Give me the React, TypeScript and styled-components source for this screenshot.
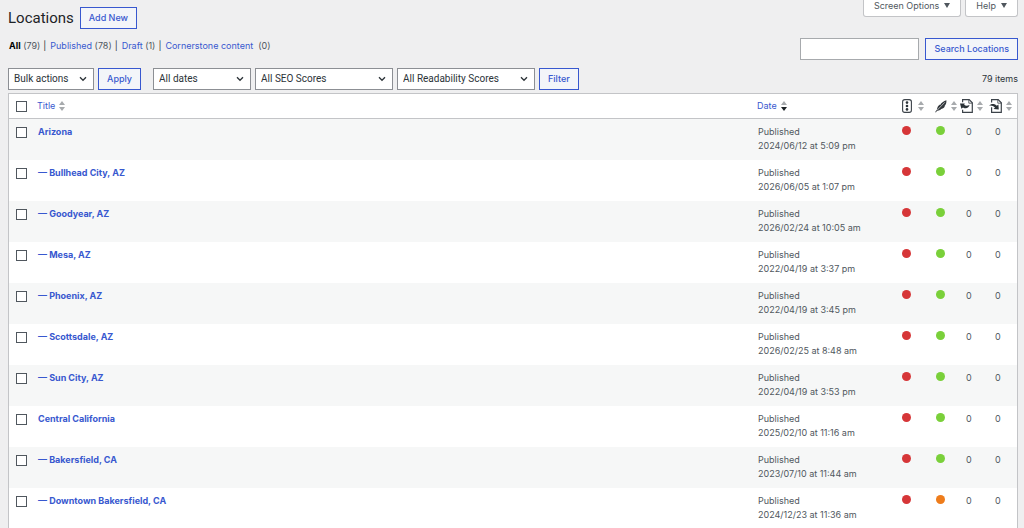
import React from "react";
import styled, { createGlobalStyle, css } from "styled-components";

const c = {
  page: "#efeff0",
  link: "#3858cf",
  text: "#2c3338",
  muted: "#50575e",
  line: "#c3c4c7",
  stripe: "#f6f7f7",
  red: "#d63638",
  green: "#7ad03a",
  orange: "#ee7c1b",
};

const GlobalStyle = createGlobalStyle`
  * { box-sizing: border-box; }
  html { scrollbar-width: none; background: ${c.page}; }
  body {
    margin: 0;
    color: ${c.text};
    font: 9px/14px Inter, "Liberation Sans", sans-serif;
  }
  button, input, select { font: inherit; margin: 0; border-radius: 0; }
  a { color: ${c.link}; text-decoration: none; }
`;

const Page = styled.main`
  padding: 0 6px 0 8px;
`;

const TopRow = styled.header`
  display: flex;
  justify-content: space-between;
  align-items: flex-start;
`;

const Heading = styled.div`
  display: flex;
  align-items: center;
  gap: 6px;
  padding-top: 7px;
`;

const Title = styled.h1`
  margin: 0;
  font-family: Roboto, Inter, sans-serif;
  font-size: 15px;
  line-height: 22px;
  font-weight: 400;
  color: #1d2327;
`;

const outlined = css`
  display: inline-flex;
  align-items: center;
  justify-content: center;
  height: 22px;
  padding: 0 8px;
  border: 1px solid ${c.link};
  background: #f3f5f9;
  color: ${c.link};
  font-weight: 500;
  white-space: nowrap;
`;

const Button = styled.button`
  ${outlined}
`;

const ButtonLink = styled.a`
  ${outlined}
`;

const ScreenTabs = styled.div`
  display: flex;
  gap: 4px;
`;

const ScreenTab = styled.button`
  display: flex;
  align-items: center;
  gap: 5px;
  height: 17px;
  padding: 0 10px 5px;
  border: 1px solid ${c.line};
  border-top: 0;
  border-radius: 0 0 3px 3px;
  background: #fff;
  color: #50575e;
`;

const SubRow = styled.div`
  display: flex;
  justify-content: space-between;
  align-items: flex-start;
  padding-top: 9px;
`;

const Views = styled.ul`
  display: flex;
  margin: 0;
  padding: 1px 0 0 1px;
  list-style: none;
  color: ${c.muted};
`;

const View = styled.li`
  white-space: pre;

  & + &::before {
    content: "|";
    margin: 0 4px 0 3px;
    color: ${c.text};
  }

  a[aria-current] {
    color: #000;
    font-weight: 700;
  }
`;

const Search = styled.form`
  display: flex;
  gap: 6px;
`;

const SearchInput = styled.input`
  width: 119px;
  height: 22px;
  padding: 0 6px;
  border: 1px solid #a7aaad;
  background: #fff;
`;

const Filters = styled.div`
  display: flex;
  align-items: center;
  padding: 8px 0 3px;
`;

const FilterGroup = styled.div`
  display: flex;
  gap: 4px;
  margin-right: 12px;
`;

const SelectBox = styled.span<{ $width: number }>`
  display: grid;
  width: ${(p) => p.$width}px;

  > * {
    grid-area: 1 / 1;
  }

  svg {
    justify-self: end;
    align-self: center;
    margin-right: 7px;
    pointer-events: none;
  }
`;

const Select = styled.select`
  appearance: none;
  width: 100%;
  height: 22px;
  padding: 0 18px 0 5px;
  border: 1px solid #8c8f94;
  background: #fff;
  color: ${c.text};
  font-family: Roboto, Inter, sans-serif;
  font-size: 10px;
`;

const Count = styled.span`
  margin-left: auto;
`;

const Table = styled.table`
  width: 100%;
  table-layout: fixed;
  border: 1px solid ${c.line};
  border-spacing: 0;
  background: #fff;
`;

const Col = styled.col<{ $width?: number }>`
  width: ${(p) => (p.$width ? `${p.$width}px` : "auto")};
`;

const HeadCell = styled.th`
  height: 25px;
  padding: 0;
  border-bottom: 1px solid ${c.line};
  text-align: left;
  font-weight: 400;
`;

const SortLink = styled.a<{ $gap?: number }>`
  display: flex;
  align-items: center;
  gap: ${(p) => p.$gap ?? 4}px;
  white-space: nowrap;
`;

const Row = styled.tr`
  height: 41px;

  &:nth-child(odd) {
    background: ${c.stripe};
  }
`;

const Cell = styled.td<{ $indent?: number }>`
  padding: 6px 0 0 ${(p) => p.$indent ?? 0}px;
  vertical-align: top;
  color: ${c.muted};
  white-space: nowrap;
`;

const RowTitle = styled.a`
  font-weight: 700;
`;

const Tick = styled.input`
  appearance: none;
  display: block;
  width: 11px;
  height: 11px;
  margin: 0 0 0 7px;
  border: 1px solid #50575e;
  background: #fff;

  td & {
    margin: 2px 0 0 7px;
  }

  &:checked {
    background: ${c.link};
  }
`;

const Dot = styled.span<{ $color: string }>`
  display: block;
  width: 9px;
  height: 9px;
  margin-top: 1px;
  border-radius: 50%;
  background: ${(p) => p.$color};
`;

const Sorter = ({ active = false }: { active?: boolean }) => (
  <svg width="6" height="10" viewBox="0 0 6 10" aria-hidden="true">
    <path d="M3 0 6 4H0Z" fill="#a7aaad" />
    <path d="M3 10 0 6H6Z" fill={active ? "#1d2327" : "#a7aaad"} />
  </svg>
);

const Chevron = () => (
  <svg width="8" height="6" viewBox="0 0 8 6" aria-hidden="true">
    <path d="M1 1.2 4 4.3 7 1.2" fill="none" stroke="#2c3338" strokeWidth="1.3" />
  </svg>
);

const Caret = () => (
  <svg width="6" height="5" viewBox="0 0 6 5" aria-hidden="true">
    <path d="M0 0H6L3 5Z" fill="#50575e" />
  </svg>
);

const SeoIcon = () => (
  <svg width="10" height="14" viewBox="0 0 10 14" aria-hidden="true">
    <rect x=".6" y=".6" width="8.8" height="12.8" rx="2.2" fill="#fff" stroke="#3c434a" strokeWidth="1.1" />
    <circle cx="5" cy="3.6" r="1.3" fill="#2c3338" />
    <circle cx="5" cy="7" r="1.3" fill="#2c3338" />
    <circle cx="5" cy="10.4" r="1.3" fill="#2c3338" />
  </svg>
);

const FeatherIcon = () => (
  <svg width="12" height="13" viewBox="0 0 12 13" aria-hidden="true">
    <path d="M11.4.3C11.6 3 10.9 5 9.4 6.2L9.9 6.3C9 8 7.4 9 5.6 9.2L6 9.6C4.8 10.5 3.4 10.9 2 10.7L.9 12.6.2 12.1 2 9.5C2.2 7.3 3.2 5.8 4.9 4.6L5 5.2C6.2 3 8.6 1 11.4.3Z" fill="#32373c" />
    <path d="M2.3 10 9.8 2.3" stroke="#fff" strokeWidth=".6" />
  </svg>
);

const OutgoingIcon = () => (
  <svg width="13" height="14" viewBox="0 0 13 14" aria-hidden="true">
    <path d="M2.6 3.2V.7H9.2L12.3 3.8V13.3H2.6V10.8" fill="none" stroke="#3c434a" strokeWidth="1.2" />
    <path d="M8.8 .7V4.2H12.3" fill="none" stroke="#3c434a" strokeWidth=".8" />
    <path d="M0 4.6 4.8 4.4 4.2 5.7C5.6 7 7.6 7 9.6 5.8 8.8 9 6 10.2 3 8.4L1.4 9.8Z" fill="#2c3338" />
  </svg>
);

const IncomingIcon = () => (
  <svg width="13" height="14" viewBox="0 0 13 14" aria-hidden="true">
    <path d="M2.6 3.6V.7H9.2L12.3 3.8V13.3H2.6V8.2" fill="none" stroke="#3c434a" strokeWidth="1.2" />
    <path d="M8.8 .7V4.2H12.3" fill="none" stroke="#3c434a" strokeWidth=".8" />
    <path d="M0 6.6C2.2 4.2 5.9 4.5 7.8 6.7L9.4 5.6 9.8 10.4 4.6 10 6 8.6C4.5 6.8 2.2 6.1 0 6.6Z" fill="#2c3338" />
  </svg>
);

type Location = { title: string; date: string; readability?: string };

const locations: Location[] = [
  { title: "Arizona", date: "2024/06/12 at 5:09 pm" },
  { title: "— Bullhead City, AZ", date: "2026/06/05 at 1:07 pm" },
  { title: "— Goodyear, AZ", date: "2026/02/24 at 10:05 am" },
  { title: "— Mesa, AZ", date: "2022/04/19 at 3:37 pm" },
  { title: "— Phoenix, AZ", date: "2022/04/19 at 3:45 pm" },
  { title: "— Scottsdale, AZ", date: "2026/02/25 at 8:48 am" },
  { title: "— Sun City, AZ", date: "2022/04/19 at 3:53 pm" },
  { title: "Central California", date: "2025/02/10 at 11:16 am" },
  { title: "— Bakersfield, CA", date: "2023/07/10 at 11:44 am" },
  { title: "— Downtown Bakersfield, CA", date: "2024/12/23 at 11:36 am", readability: c.orange },
];

const views = [
  { label: "All", count: 79, current: true },
  { label: "Published", count: 78 },
  { label: "Draft", count: 1 },
  { label: "Cornerstone content ", count: 0 },
];

const Dropdown = ({ label, width }: { label: string; width: number }) => (
  <SelectBox $width={width}>
    <Select aria-label={label}>
      <option>{label}</option>
    </Select>
    <Chevron />
  </SelectBox>
);

export default function App() {
  return (
    <Page>
      <GlobalStyle />
      <TopRow>
        <Heading>
          <Title>Locations</Title>
          <ButtonLink href="#new">Add New</ButtonLink>
        </Heading>
        <ScreenTabs>
          <ScreenTab type="button">Screen Options <Caret /></ScreenTab>
          <ScreenTab type="button">Help <Caret /></ScreenTab>
        </ScreenTabs>
      </TopRow>

      <SubRow>
        <Views>
          {views.map((v) => (
            <View key={v.label}>
              <a href="#view" aria-current={v.current ? "page" : undefined}>{v.label}</a>
              {` (${v.count})`}
            </View>
          ))}
        </Views>
        <Search onSubmit={(e) => e.preventDefault()}>
          <SearchInput type="search" aria-label="Search Locations" />
          <Button type="submit">Search Locations</Button>
        </Search>
      </SubRow>

      <Filters>
        <FilterGroup>
          <Dropdown label="Bulk actions" width={86} />
          <Button type="button">Apply</Button>
        </FilterGroup>
        <FilterGroup>
          <Dropdown label="All dates" width={98} />
          <Dropdown label="All SEO Scores" width={138} />
          <Dropdown label="All Readability Scores" width={138} />
          <Button type="button">Filter</Button>
        </FilterGroup>
        <Count>79 items</Count>
      </Filters>

      <Table>
        <colgroup>
          <Col $width={28} />
          <Col />
          <Col $width={145} />
          <Col $width={33} />
          <Col $width={25} />
          <Col $width={29} />
          <Col $width={28} />
        </colgroup>
        <thead>
          <tr>
            <HeadCell><Tick type="checkbox" aria-label="Select all" /></HeadCell>
            <HeadCell><SortLink href="#title">Title <Sorter /></SortLink></HeadCell>
            <HeadCell><SortLink href="#date">Date <Sorter active /></SortLink></HeadCell>
            <HeadCell><SortLink href="#seo" aria-label="SEO score" $gap={6}><SeoIcon /><Sorter /></SortLink></HeadCell>
            <HeadCell><SortLink href="#readability" aria-label="Readability score"><FeatherIcon /><Sorter /></SortLink></HeadCell>
            <HeadCell><SortLink href="#outgoing" aria-label="Outgoing internal links"><OutgoingIcon /><Sorter /></SortLink></HeadCell>
            <HeadCell><SortLink href="#incoming" aria-label="Received internal links"><IncomingIcon /><Sorter /></SortLink></HeadCell>
          </tr>
        </thead>
        <tbody>
          {locations.map((l) => (
            <Row key={l.title}>
              <Cell><Tick type="checkbox" aria-label={`Select ${l.title}`} /></Cell>
              <Cell $indent={1}><RowTitle href="#edit">{l.title}</RowTitle></Cell>
              <Cell $indent={1}>Published<br />{l.date}</Cell>
              <Cell><Dot $color={c.red} /></Cell>
              <Cell $indent={1}><Dot $color={l.readability ?? c.green} /></Cell>
              <Cell $indent={6}>0</Cell>
              <Cell $indent={6}>0</Cell>
            </Row>
          ))}
        </tbody>
      </Table>
    </Page>
  );
}
